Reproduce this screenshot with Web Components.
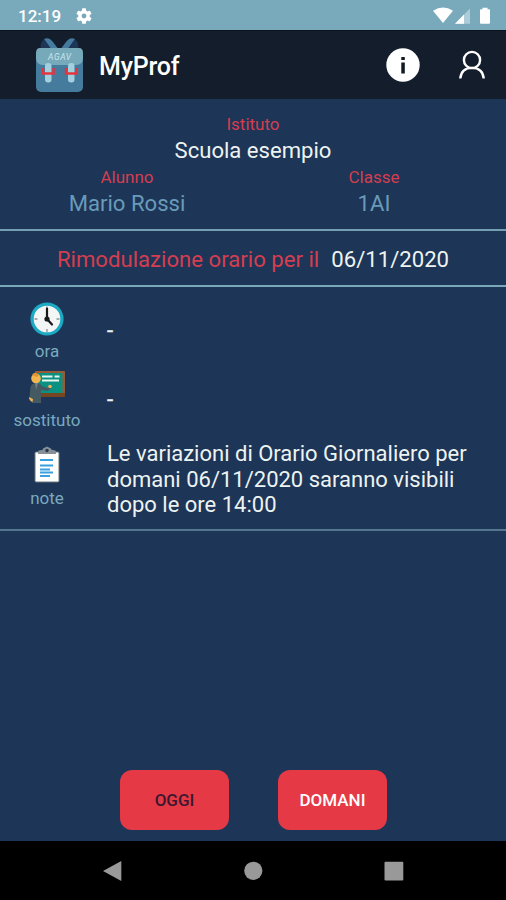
<!DOCTYPE html>
<html lang="it">
<head>
<meta charset="utf-8">
<title>MyProf</title>
<style>
html,body{margin:0;height:100%;overflow:hidden;background:#1d3557}
body{font-family:Roboto,"Noto Sans",sans-serif}
</style>
</head>
<body>
<my-app></my-app>
<script>
const define = (name, html) => customElements.define(name, class extends HTMLElement {
  constructor() {
    super();
    this.attachShadow({mode: 'open'}).innerHTML = '<style>*{box-sizing:border-box}svg{display:block;flex:none}</style>' + html;
  }
});

define('status-bar', `
<style>
:host{display:flex;align-items:center;height:30px;box-sizing:border-box;background:#78aabc;color:#fff;padding:1px 15px 0 18px}
.time{font-size:17px;line-height:20px;font-weight:500;width:58px}
.right{margin-left:auto}
</style>
<span class="time">12:19</span>
<svg width="16" height="16" viewBox="2 2 20 20" fill="#fff"><path d="M19.14 12.94c.04-.3.06-.61.06-.94 0-.32-.02-.64-.07-.94l2.03-1.58a.49.49 0 0 0 .12-.61l-1.92-3.32a.49.49 0 0 0-.59-.22l-2.39.96c-.5-.38-1.03-.7-1.62-.94l-.36-2.54a.48.48 0 0 0-.48-.41h-3.84a.47.47 0 0 0-.47.41l-.36 2.54c-.59.24-1.13.57-1.62.94l-2.39-.96a.48.48 0 0 0-.59.22L2.74 8.87a.47.47 0 0 0 .12.61l2.03 1.58c-.05.3-.09.63-.09.94s.02.64.07.94l-2.03 1.58a.49.49 0 0 0-.12.61l1.92 3.32c.12.22.37.29.59.22l2.39-.96c.5.38 1.03.7 1.62.94l.36 2.54c.05.24.24.41.48.41h3.84c.24 0 .44-.17.47-.41l.36-2.54c.59-.24 1.13-.56 1.62-.94l2.39.96c.22.08.47 0 .59-.22l1.92-3.32a.47.47 0 0 0-.12-.61l-2.01-1.58zM12 15a3 3 0 1 1 0-6 3 3 0 0 1 0 6z"/></svg>
<svg class="right" width="58" height="18" viewBox="0 0 58 18" fill="#fff"><path d="M0 3.8Q10 -3 20 3.8L10 16Z"/><path d="M37 1.500V16.700H22Z" opacity=".4"/><path d="M31 7.500V16.700H22Z"/><path d="M49.500 0.800h5v1.500h1.500q1 0 1 1v12.500q0 1-1 1h-8q-1 0-1-1V3.300q0-1 1-1h1.500z"/></svg>
`);

define('app-header', `
<style>
:host{display:flex;align-items:center;height:69px;box-sizing:border-box;background:#131d2c;border-top:1px solid #09111c;padding:0 20px 0 35px;color:#fff}
.title{font-size:25px;font-weight:500;line-height:32px;letter-spacing:-.2px;margin:3px 0 0 15px}
.info{margin-left:auto;margin-right:38px}
</style>
<svg width="49" height="56" viewBox="0 0 49 56">
<path d="M6 13Q4 5 10 2L18 12ZM43 13Q45 5 39 2L31 12Z" fill="#1d3557"/>
<path d="M9 2Q14-.5 18 5L24 13H17L12 6Q10 3 9 2ZM40 2Q35-.5 31 5L25 13H32L37 6Q39 3 40 2Z" fill="#457b9d"/>
<rect x="1" y="17" width="47" height="38" rx="5" fill="#457b9d"/>
<path d="M5 11H44Q48 11 48 16V21Q48 28 41 28H8Q1 28 1 21V16Q1 11 5 11Z" fill="#76a9ba"/>
<rect x="10" y="26" width="6.500" height="19.500" rx="3" fill="#a3d0df"/><rect x="33" y="26" width="6.500" height="19.500" rx="3" fill="#a3d0df"/>
<path d="M8 31V36.500H18.500V31M31 31V36.500H41.500V31" fill="none" stroke="#e6343f" stroke-width="2.400"/>
<text x="24.500" y="22.500" text-anchor="middle" font-family="Roboto,sans-serif" font-size="8.500" font-style="italic" textLength="23" fill="#c9e7ed">AGAV</text>
</svg>
<span class="title">MyProf</span>
<svg class="info" width="34" height="34" viewBox="0 0 34 34"><circle cx="17" cy="17" r="16.700" fill="#fff"/><path d="M15.300 9h3.500v3h-3.500zM15.300 14.500h3.500V25.500h-3.500z" fill="#101924"/></svg>
<svg width="28" height="30" viewBox="0 0 28 30" fill="none" stroke="#fff" stroke-width="2.400"><circle cx="14" cy="10" r="8.100"/><path d="M2.300 28.500C3 21 7.500 17.900 14 17.900S25 21 25.700 28.500"/></svg>
`);

define('labelled-value', `
<style>
:host{display:flex;flex-direction:column;align-items:center;font-size:22.100px;line-height:27px;color:#699bb9}
.label{font-size:17px;line-height:26px;color:#d43e50}
</style>
<span class="label"><slot name="label"></slot></span><span><slot></slot></span>
`);

define('student-card', `
<style>
:host{display:block;height:130px;box-sizing:border-box;padding-top:12px}
.school{color:#edf3f1}
.pair{display:grid;grid-template-columns:254px 1fr;padding-right:12px}
</style>
<labelled-value class="school"><span slot="label">Istituto</span>Scuola esempio</labelled-value>
<div class="pair">
<labelled-value><span slot="label">Alunno</span>Mario Rossi</labelled-value>
<labelled-value><span slot="label">Classe</span>1AI</labelled-value>
</div>
`);

define('date-heading', `
<style>
:host{display:flex;align-items:center;justify-content:center;gap:12px;height:58px;box-sizing:border-box;border-top:2px solid #749fb3;border-bottom:2px solid #79a9b8;font-size:22.150px;line-height:28px;color:#d43e50;padding-top:2px}
.date{color:#edf3f1}
</style>
<span>Rimodulazione orario per il</span><span class="date"><slot></slot></span>
`);

define('info-row', `
<style>
:host{display:grid;grid-template-columns:94px 1fr;column-gap:13px;height:69px}
.side{display:flex;flex-direction:column;align-items:center;padding-top:var(--icon-top,0)}
.label{font-size:17px;line-height:22px;color:#79a9bf;margin-top:var(--label-gap,4px)}
.value{font-size:22px;line-height:25.600px;color:#edf3f1;padding-top:var(--value-top,16px);white-space:nowrap;-webkit-text-stroke:var(--stroke,0)}
</style>
<div class="side"><slot name="icon"></slot><span class="label"><slot name="label"></slot></span></div>
<div class="value"><slot></slot></div>
`);

define('clock-icon', `<style>:host{display:block}</style>
<svg width="34" height="34" viewBox="0 0 34 34"><circle cx="17" cy="17" r="16.600" fill="#1ba9c3"/><circle cx="17" cy="17" r="13.300" fill="#f4f6f6"/><path d="M17 4.500v2M17 27v3M4.500 17h3M26.500 17h3" stroke="#899499" stroke-width="1.300"/><path d="M17 6.500V17L22 22.500" stroke="#17191d" stroke-width="2.200" fill="none" stroke-linecap="round"/><circle cx="17" cy="17" r="2.600" fill="#17191d"/></svg>`);

define('teacher-icon', `<style>:host{display:block}</style>
<svg width="36" height="32" viewBox="0 0 36 32"><rect x="6" y="0" width="30" height="26" rx="1" fill="#985b35"/><rect x="8" y="2" width="25.500" height="20.500" fill="#0b9182"/><rect x="8" y="22" width="28" height="4" fill="#784522"/><path d="M13 5.500h10.500M25.500 5.500h5M13 9.500h17" stroke="#e7f5ed" stroke-width="2"/><path d="M0.500 26L1.500 16Q2.500 12 7.500 12Q11 12 13 15L18.500 17L20 15L22 18L18.500 20L12 19V32H3L2 29Z" fill="#455963"/><circle cx="7" cy="7.500" r="4.800" fill="#f4b54e"/><path d="M3 4Q6-.5 10 4L8 6Z" fill="#e29434"/><circle cx="21" cy="15.500" r="1.800" fill="#efb259"/><path d="M0 26L4 28L3.500 31Q0 30 0 26Z" fill="#efb259"/><path d="M6 12L7 19L9 12Z" fill="#70828c"/></svg>`);

define('note-icon', `<style>:host{display:block}</style>
<svg width="26" height="37" viewBox="0 0 26 37"><rect x="1" y="6" width="24" height="30" rx="1" fill="#fff" stroke="#69777b"/><path d="M4 8V6Q4 4 8 4Q9 4 9 2.500L13 .5L17 2.500Q17 4 19 4Q22 4 22 6V8Z" fill="#848f98"/><circle cx="13" cy="4.500" r="1.700" fill="#26374c"/><path d="M6 14H19M6 19.500H19M6 23.500H16M6 26.500H19M6 30H16" stroke="#38a0df" stroke-width="2.200"/></svg>`);

define('action-button', `
<style>
:host{display:block}
button{display:block;width:109px;height:60px;border:0;border-radius:12px;padding:1px 0 0;background:#e63946;color:inherit;font:500 17px/20px Roboto,sans-serif}
</style><button><slot></slot></button>
`);

define('system-nav', `
<style>:host{display:grid;grid-template-columns:repeat(3,140.500px);justify-content:center;align-items:center;justify-items:center;height:59px;background:#000}</style>
<svg width="22" height="22" viewBox="0 0 22 22"><path d="M1 11L19.300 1V21Z" fill="#999"/></svg>
<svg width="20" height="20" viewBox="0 0 20 20"><circle cx="10.300" cy="9.800" r="9.100" fill="#999"/></svg>
<svg width="20" height="20" viewBox="0 0 20 20"><rect x=".5" y=".8" width="18.800" height="18.800" rx="1" fill="#999"/></svg>
`);

define('my-app', `
<style>
:host{display:flex;flex-direction:column;width:506px;height:900px;background:#1d3557}
.rows{height:244px;padding-top:15px;border-bottom:2px solid #55768f}
.actions{display:flex;gap:49px;justify-content:center;margin-top:auto;padding:0 0 11.500px 1px}
.today{color:#3a1830}.tomorrow{color:#fff}
.hour{--value-top:16px;--stroke:.4px}
.teacher{--value-top:16px;--label-gap:6px;--stroke:.4px}
.note{--value-top:1px;--icon-top:6px;--label-gap:4px}
</style>
<status-bar></status-bar>
<app-header></app-header>
<student-card></student-card>
<date-heading>06/11/2020</date-heading>
<div class="rows">
<info-row class="hour"><clock-icon slot="icon"></clock-icon><span slot="label">ora</span>-</info-row>
<info-row class="teacher"><teacher-icon slot="icon"></teacher-icon><span slot="label">sostituto</span>-</info-row>
<info-row class="note"><note-icon slot="icon"></note-icon><span slot="label">note</span>Le variazioni di Orario Giornaliero per<br>domani 06/11/2020 saranno visibili<br>dopo le ore 14:00</info-row>
</div>
<div class="actions"><action-button class="today">OGGI</action-button><action-button class="tomorrow">DOMANI</action-button></div>
<system-nav></system-nav>
`);
</script>
</body>
</html>
